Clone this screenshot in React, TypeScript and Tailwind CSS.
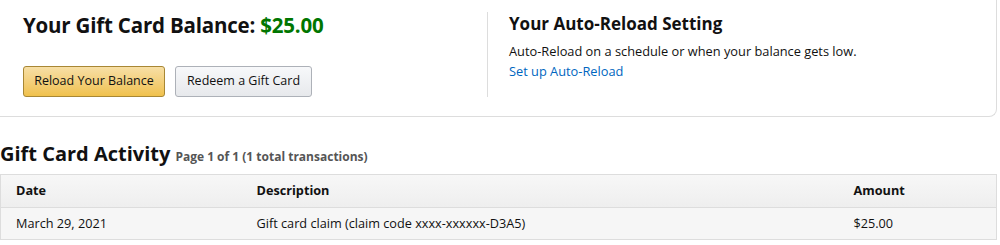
export default function App() {
  return (
    <div className="h-[245px] w-[1000px] overflow-hidden bg-white text-[#111] [font-family:'Open_Sans',Arial,sans-serif]">
      <div className="flex w-[997px] rounded-br-lg border-r border-b border-[#ddd] pt-[12px] pb-[19px]">
        <div className="w-[487px] pl-[23px]">
          <h1 className="text-[20.5px] leading-[26px] font-bold tracking-[-0.2px]">
            Your Gift Card Balance: <span className="text-[#007600]">$25.00</span>
          </h1>
          <div className="mt-[28px] flex gap-[10px]">
            <button className="h-[31px] w-[142px] rounded-[3px] border border-[#a88734] bg-gradient-to-b from-[#f7dfa5] to-[#f0c14b] text-[12.5px] text-[#111]">
              Reload Your Balance
            </button>
            <button className="h-[31px] w-[137px] rounded-[3px] border border-[#adb1b8] bg-gradient-to-b from-[#f7f8fa] to-[#e7e9ec] text-[12.5px] text-[#111]">
              Redeem a Gift Card
            </button>
          </div>
        </div>
        <div className="flex-1 border-l border-[#ddd] pl-[21px]">
          <h2 className="text-[17px] leading-[24px] font-bold">Your Auto-Reload Setting</h2>
          <p className="mt-[5px] text-[12.8px] leading-[20px] text-[#111]">
            Auto-Reload on a schedule or when your balance gets low.
          </p>
          <a className="block text-[12.8px] leading-[20px] text-[#0066c0]">Set up Auto-Reload</a>
        </div>
      </div>

      <div className="mt-[24px] flex items-baseline gap-[5px]">
        <h2 className="text-[20px] leading-[26px] font-bold">Gift Card Activity</h2>
        <span className="text-[12px] font-bold text-[#555]">Page 1 of 1 (1 total transactions)</span>
      </div>

      <table className="mt-[7px] w-[997px] border-collapse text-[12.7px]">
        <thead>
          <tr className="h-[33px] bg-gradient-to-b from-[#f7f7f7] to-[#eeeeee]">
            <th className="w-[241px] border border-[#ddd] border-r-0 pl-[15px] text-left font-bold">Date</th>
            <th className="w-[597px] border-y border-[#ddd] pl-[15px] text-left font-bold">Description</th>
            <th className="border border-[#ddd] border-l-0 pl-[15px] text-left font-bold">Amount</th>
          </tr>
        </thead>
        <tbody>
          <tr className="h-[32px] bg-[#f6f6f6]">
            <td className="border border-[#ddd] border-r-0 pl-[15px]">March 29, 2021</td>
            <td className="border-y border-[#ddd] pl-[15px]">Gift card claim (claim code xxxx-xxxxxx-D3A5)</td>
            <td className="border border-[#ddd] border-l-0 pl-[15px]">$25.00</td>
          </tr>
        </tbody>
      </table>
    </div>
  );
}
